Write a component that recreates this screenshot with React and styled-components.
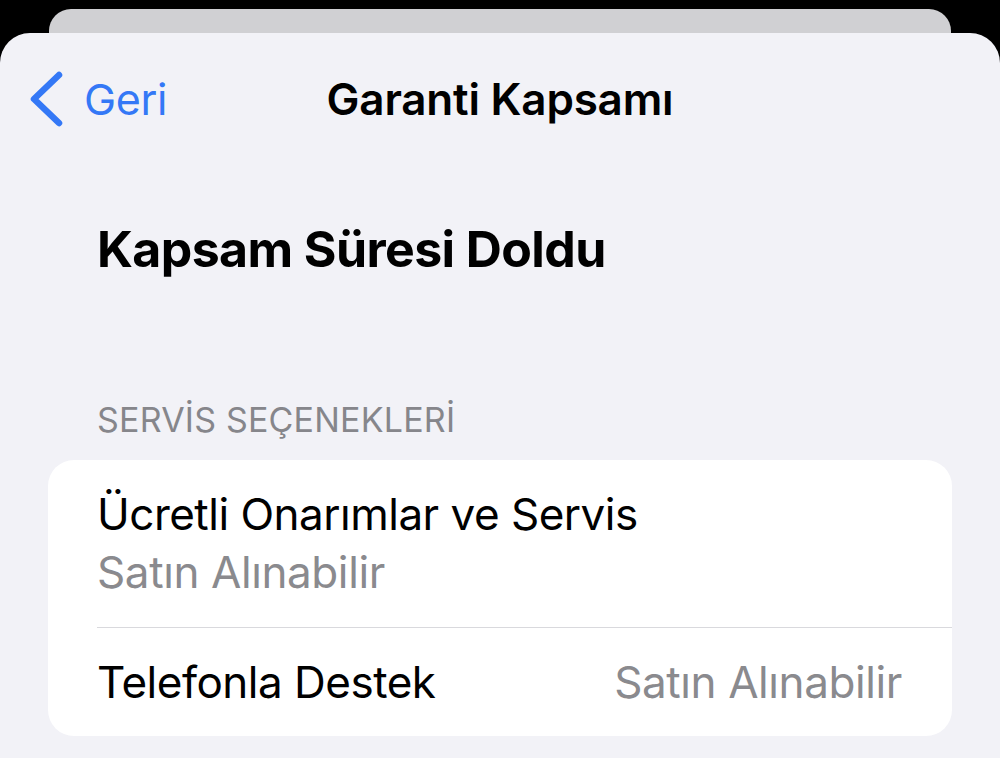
import styled, { createGlobalStyle } from "styled-components";

const GlobalStyle = createGlobalStyle`
  html, body {
    margin: 0;
    padding: 0;
    background: #000;
  }
  body {
    font-family: Inter, "Noto Sans", "Liberation Sans", sans-serif;
    -webkit-font-smoothing: antialiased;
  }
`;

const Screen = styled.div`
  height: 758px;
  overflow: hidden;
  padding-top: 9px;
  box-sizing: border-box;
  display: flex;
  flex-direction: column;
`;

const BackSheet = styled.div`
  height: 24px;
  margin: 0 49px;
  background: #d0d0d3;
  border-radius: 22px 22px 0 0;
  flex-shrink: 0;
`;

const Sheet = styled.div`
  flex: 1;
  background: #f2f2f7;
  border-radius: 30px 30px 0 0;
  display: flex;
  flex-direction: column;
`;

const NavBar = styled.div`
  height: 132px;
  display: grid;
  grid-template-columns: 1fr auto 1fr;
  align-items: center;
  padding: 0 28px;
`;

const BackButton = styled.button`
  display: flex;
  align-items: center;
  gap: 20px;
  background: none;
  border: none;
  padding: 0;
  color: #3478f6;
  font-family: inherit;
  font-size: 43px;
  font-weight: 400;
  letter-spacing: -0.3px;
  cursor: pointer;
  justify-self: start;
`;

const NavTitle = styled.div`
  font-size: 44px;
  font-weight: 600;
  color: #000;
  letter-spacing: -0.2px;
`;

const LargeTitle = styled.h1`
  margin: 54px 0 0;
  padding-left: 97px;
  font-size: 50px;
  line-height: 60px;
  font-weight: 700;
  color: #000;
  letter-spacing: -0.6px;
`;

const SectionHeader = styled.div`
  margin-top: 121px;
  padding-left: 97px;
  font-size: 34px;
  line-height: 40px;
  color: #86868b;
  letter-spacing: 0.2px;
`;

const Card = styled.div`
  margin: 20px 48px 0;
  background: #fff;
  border-radius: 26px;
  padding-left: 49px;
`;

const Row = styled.div`
  display: flex;
  align-items: ${(p) => (p.stacked ? "stretch" : "baseline")};
  flex-direction: ${(p) => (p.stacked ? "column" : "row")};
  justify-content: space-between;
  padding: 28px 50px ${(p) => (p.stacked ? "29px" : "28px")} 0;
  border-bottom: ${(p) => (p.divider ? "1px solid #d9d9dd" : "none")};
`;

const RowTitle = styled.div`
  font-size: 44px;
  line-height: 52px;
  color: #000;
  letter-spacing: -0.5px;
`;

const RowSub = styled.div`
  margin-top: 6px;
  font-size: 44px;
  line-height: 52px;
  color: #8a8a8e;
  letter-spacing: -0.4px;
`;

const RowValue = styled.div`
  font-size: 44px;
  line-height: 52px;
  color: #8a8a8e;
  letter-spacing: -0.4px;
`;

function Chevron() {
  return (
    <svg width="36" height="56" viewBox="0 0 36 56" fill="none">
      <polyline
        points="31,4 6,28 31,52"
        stroke="#3478f6"
        strokeWidth="6.5"
        strokeLinecap="round"
        strokeLinejoin="round"
      />
    </svg>
  );
}

export default function App() {
  return (
    <>
      <GlobalStyle />
      <Screen>
        <BackSheet />
        <Sheet>
          <NavBar>
            <BackButton>
              <Chevron />
              Geri
            </BackButton>
            <NavTitle>Garanti Kapsamı</NavTitle>
            <span />
          </NavBar>
          <LargeTitle>Kapsam Süresi Doldu</LargeTitle>
          <SectionHeader>SERVİS SEÇENEKLERİ</SectionHeader>
          <Card>
            <Row stacked divider>
              <RowTitle>Ücretli Onarımlar ve Servis</RowTitle>
              <RowSub>Satın Alınabilir</RowSub>
            </Row>
            <Row>
              <RowTitle>Telefonla Destek</RowTitle>
              <RowValue>Satın Alınabilir</RowValue>
            </Row>
          </Card>
        </Sheet>
      </Screen>
    </>
  );
}
